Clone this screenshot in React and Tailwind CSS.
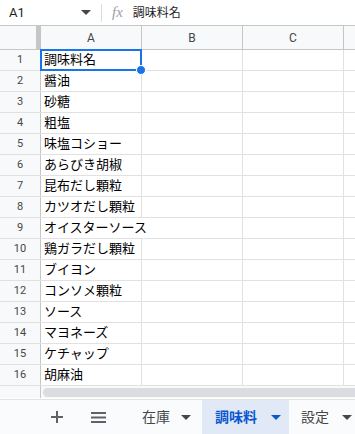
import React from 'react';

const items = [
  '調味料名', '醤油', '砂糖', '粗塩', '味塩コショー', 'あらびき胡椒', '昆布だし顆粒', 'カツオだし顆粒',
  'オイスターソース', '鶏ガラだし顆粒', 'ブイヨン', 'コンソメ顆粒', 'ソース', 'マヨネーズ', 'ケチャップ', '胡麻油',
];

// セル幅をはみ出すテキスト（右罫線を隠す）
const overflowRows = [9];

function Caret({ className = 'text-[#444746]' }) {
  return (
    <svg width="10" height="5" viewBox="0 0 10 5" className={`shrink-0 ${className}`}>
      <path d="M0 0h10L5 5z" fill="currentColor" />
    </svg>
  );
}

export default function App() {
  return (
    <div
      className="w-[355px] h-[434px] overflow-hidden bg-white flex flex-col text-[#202124]"
      style={{ fontFamily: 'Roboto, "Noto Sans CJK JP", sans-serif' }}
    >
      {/* 名前ボックスと数式バー */}
      <div className="h-[26px] shrink-0 border-b border-[#c4c7c5] flex items-center">
        <div className="w-[101px] pl-[9px] pr-[10px] flex items-center justify-between">
          <span className="text-[13px] text-[#1f1f1f]">A1</span>
          <Caret />
        </div>
        <div className="w-px h-[18px] bg-[#dadce0]" />
        <span
          className="ml-[10px] text-[15px] italic text-[#9aa0a6] leading-none"
          style={{ fontFamily: '"Liberation Serif", serif' }}
        >
          fx
        </span>
        <span className="ml-[10px] text-[12px] text-[#1f1f1f]">調味料名</span>
      </div>

      {/* 列見出し */}
      <div className="h-[24px] shrink-0 flex border-b border-[#c4c7c5] bg-[#f8f9fa] text-[12px] text-[#444746]">
        <div className="w-[41px] shrink-0 border-r-[5px] border-[#c4c7c5] bg-[#f8f9fa]" />
        {['A', 'B', 'C'].map((c) => (
          <div key={c} className="w-[101px] shrink-0 border-r border-[#c4c7c5] flex items-center justify-center">
            {c}
          </div>
        ))}
        <div className="flex-1" />
      </div>

      {/* 行 */}
      <div className="flex-1 flex flex-col">
        {items.map((name, i) => {
          const row = i + 1;
          const hideBorder = overflowRows.includes(row);
          return (
            <div key={row} className="h-[21px] shrink-0 flex border-b border-[#e1e1e1]">
              <div className="w-[41px] shrink-0 bg-[#f8f9fa] border-r border-[#c4c7c5] flex items-center justify-center text-[11px] text-[#444746]">
                {row}
              </div>
              <div
                className={`relative w-[101px] shrink-0 border-r ${hideBorder ? 'border-transparent' : 'border-[#e1e1e1]'}`}
              >
                <span
                  className="absolute left-[3px] top-0 h-full flex items-center whitespace-nowrap text-[13px] text-black z-10"
                  style={{ fontFamily: '"Liberation Sans", "Noto Sans CJK JP", sans-serif' }}
                >
                  {name}
                </span>
                {row === 1 && (
                  <>
                    <div className="absolute -left-px -top-px -right-px -bottom-px border-2 border-[#1a73e8] z-20" />
                    <div className="absolute -right-[5px] -bottom-[5px] w-[10px] h-[10px] rounded-full bg-[#1a73e8] border border-white z-30" />
                  </>
                )}
              </div>
              <div className="w-[101px] shrink-0 border-r border-[#e1e1e1]" />
              <div className="w-[101px] shrink-0 border-r border-[#e1e1e1]" />
              <div className="flex-1" />
            </div>
          );
        })}

        {/* 横スクロールバー */}
        <div className="h-[12px] shrink-0 flex">
          <div className="w-[41px] shrink-0 bg-[#f8f9fa] border-r border-[#c4c7c5]" />
          <div className="flex-1 bg-[#f8f9fa] flex items-center pl-[2px]">
            <div className="h-[9px] w-full rounded-l-full bg-[#dadce0]" />
          </div>
        </div>
      </div>

      {/* シートタブ */}
      <div className="h-[35px] shrink-0 border-t border-[#e1e3e1] bg-[#f9fbfd] flex items-center text-[14px] text-[#444746] whitespace-nowrap">
        <div className="w-[51px] shrink-0" />
        <div className="w-[12px] shrink-0 flex items-center justify-center">
          <svg width="12" height="12" viewBox="0 0 12 12">
            <path d="M5 0h2v5h5v2H7v5H5V7H0V5h5z" fill="#5f6368" />
          </svg>
        </div>
        <div className="w-[28px] shrink-0" />
        <div className="w-[15px] shrink-0 flex items-center justify-center">
          <svg width="15" height="11" viewBox="0 0 15 11">
            <path d="M0 0h15v2H0zM0 4.5h15v2H0zM0 9h15v2H0z" fill="#5f6368" />
          </svg>
        </div>
        <div className="w-[36px] shrink-0" />
        <div className="shrink-0 flex items-center gap-[11px] pr-[11px]">
          <span>在庫</span>
          <Caret />
        </div>
        <div className="shrink-0 h-full w-[87px] bg-[#e1e9f7] flex items-center pl-[13px] gap-[14px] text-[#0b57d0] font-bold">
          <span>調味料</span>
          <Caret className="text-[#0b57d0]" />
        </div>
        <div className="shrink-0 flex items-center gap-[13px] pl-[12px]">
          <span>設定</span>
          <Caret />
        </div>
      </div>
    </div>
  );
}
